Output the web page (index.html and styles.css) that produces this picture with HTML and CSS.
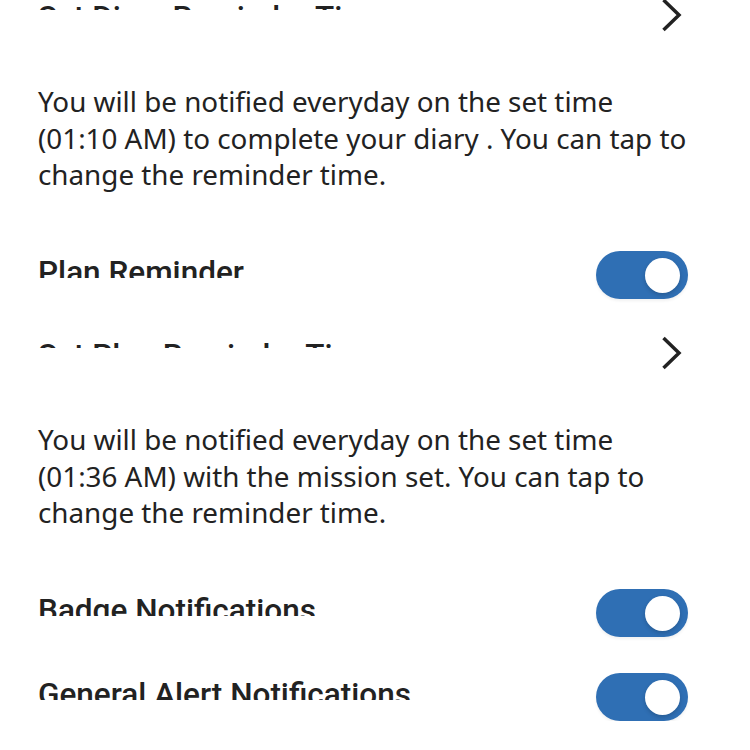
FILE: index.html
```html
<!DOCTYPE html>
<html>
<head>
<meta charset="utf-8">
<link rel="stylesheet" href="styles.css">
</head>
<body>
<div class="screen">
  <div class="row nav-row first">
    <span class="label label-nav">Set Diary Reminder Time</span>
    <svg class="chevron" width="26" height="34" viewBox="0 0 26 34"><path d="M1.5 2 L17 17 L1.5 32" fill="none" stroke="#222" stroke-width="3.5"/></svg>
  </div>
  <p class="desc">You will be notified everyday on the set time (01:10 AM) to complete your diary . You can tap to change the reminder time.</p>
  <div class="row toggle-row">
    <span class="label label-toggle">Plan Reminder</span>
    <span class="switch"><span class="knob"></span></span>
  </div>
  <div class="row nav-row">
    <span class="label label-nav">Set Plan Reminder Time</span>
    <svg class="chevron" width="26" height="34" viewBox="0 0 26 34"><path d="M1.5 2 L17 17 L1.5 32" fill="none" stroke="#222" stroke-width="3.5"/></svg>
  </div>
  <p class="desc">You will be notified everyday on the set time (01:36 AM) with the mission set. You can tap to change the reminder time.</p>
  <div class="row toggle-row badge">
    <span class="label label-toggle">Badge Notifications</span>
    <span class="switch"><span class="knob"></span></span>
  </div>
  <div class="row toggle-row general">
    <span class="label label-toggle">General Alert Notifications</span>
    <span class="switch"><span class="knob"></span></span>
  </div>
</div>
</body>
</html>
```
FILE: styles.css
```css
html, body {
  margin: 0;
  padding: 0;
  background: #ffffff;
}
.screen {
  width: 650px;
  padding: 0 62px 0 38px;
  color: #222222;
}
.row {
  display: flex;
  justify-content: space-between;
  align-items: center;
}
.label {
  align-self: flex-start;
  box-sizing: border-box;
  overflow: hidden;
  font-family: Roboto, "Liberation Sans", sans-serif;
  font-weight: 500;
  font-size: 31.5px;
  line-height: 1;
  white-space: nowrap;
}
.nav-row {
  height: 34px;
  margin-top: 37px;
}
.nav-row.first {
  margin-top: -2px;
}
.label-nav {
  height: 12px;
  padding-top: 4px;
}
.chevron {
  display: block;
}
.desc {
  margin: 51px 0 0 0;
  font-family: "Noto Sans", "Open Sans", sans-serif;
  font-size: 27.8px;
  line-height: 36.5px;
  font-weight: 400;
}
.toggle-row {
  height: 48px;
  margin-top: 58.5px;
}
.toggle-row.general {
  margin-top: 36px;
}
.label-toggle {
  height: 27px;
  padding-top: 6px;
}
.switch {
  display: flex;
  justify-content: flex-end;
  align-items: center;
  box-sizing: border-box;
  width: 92px;
  height: 48px;
  padding: 0 8px;
  border-radius: 24px;
  background: #2f6fb4;
  box-shadow: 0 2px 3px rgba(0, 0, 0, 0.06);
}
.knob {
  width: 35px;
  height: 35px;
  border-radius: 50%;
  background: #ffffff;
  box-shadow: 0 2px 4px rgba(0, 0, 0, 0.18);
}
```
